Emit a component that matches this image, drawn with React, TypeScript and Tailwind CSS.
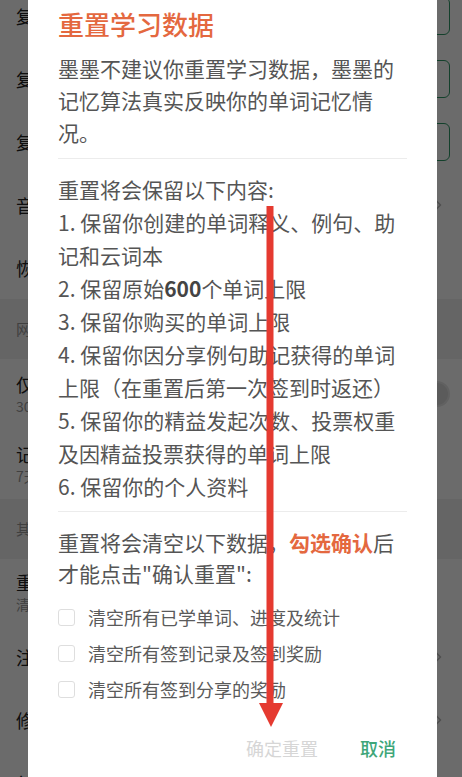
import { ChevronRight } from "lucide-react";

type Row = {
  label: string;
  sub?: string;
  right?: "button" | "chevron" | "switch";
  h: string;
  header?: boolean;
};

const rows: Row[] = [
  { label: "复习提醒", right: "button", h: "h-[63px]" },
  { label: "复习模式", right: "button", h: "h-[63px]" },
  { label: "复习顺序", right: "button", h: "h-[63px]" },
  { label: "音频设置", right: "chevron", h: "h-[63px]" },
  { label: "恢复默认设置", h: "h-[63px]" },
  { label: "网络", h: "h-[60px]", header: true },
  { label: "仅在WiFi下下载", sub: "30MB", right: "switch", h: "h-[70px]" },
  { label: "记忆缓存", sub: "7天", h: "h-[70px]" },
  { label: "其他", h: "h-[60px]", header: true },
  { label: "重置学习数据", sub: "清空学习记录", h: "h-[65px]" },
  { label: "注销账号", right: "chevron", h: "h-[65px]" },
  { label: "修改密码", right: "chevron", h: "h-[62px]" },
  { label: "关于我们", right: "chevron", h: "h-[63px]" },
];

const intro = ["墨墨不建议你重置学习数据，墨墨的", "记忆算法真实反映你的单词记忆情", "况。"];

const clearItems = ["清空所有已学单词、进度及统计", "清空所有签到记录及签到奖励", "清空所有签到分享的奖励"];

function SettingsList() {
  return (
    <div className="-mt-[16px] flex flex-col">
      {rows.map((r) =>
        r.header ? (
          <div key={r.label} className={`${r.h} flex items-center bg-[#f1f1f1] px-4 text-[15px] text-[#999]`}>
            {r.label}
          </div>
        ) : (
          <div key={r.label} className={`${r.h} flex items-center justify-between pl-4 pr-3`}>
            <div className="flex flex-col">
              <span className="text-[18px] leading-6 text-[#222]">{r.label}</span>
              {r.sub && <span className="text-[14px] leading-5 text-[#999]">{r.sub}</span>}
            </div>
            {r.right === "button" && (
              <div className="flex h-[38px] w-[64px] items-center justify-center rounded-[6px] border border-[#2f9a68] text-[15px] text-[#2f9a68]">
                设置
              </div>
            )}
            {r.right === "chevron" && <ChevronRight size={20} className="mr-[2px] text-[#bbb]" />}
            {r.right === "switch" && (
              <div className="flex h-[26px] w-[48px] items-center justify-end rounded-full bg-[#e8e8e8] px-[2px]">
                <div className="h-[22px] w-[22px] rounded-full bg-[#d9d9d9]" />
              </div>
            )}
          </div>
        )
      )}
    </div>
  );
}

function ResetDialog() {
  return (
    <div className="absolute left-[28px] top-[-16px] w-[409px] rounded-[14px] bg-white px-[30px] pt-[23px] pb-[40px]">
      <h1 className="text-[26px] font-medium leading-[34px] text-[#e4683f]">重置学习数据</h1>

      <div className="mt-[11px] text-[21px] leading-[32px] text-[#555]">
        {intro.map((l) => (
          <div key={l} className="whitespace-nowrap">
            {l}
          </div>
        ))}
      </div>

      <div className="mt-[10px] h-px bg-[#ececec]" />

      {/* what is kept after a reset */}
      <div className="mt-[14px] whitespace-nowrap text-[21px] leading-[33px] text-[#555]">
        <div>重置将会保留以下内容:</div>
        <div>1. 保留你创建的单词释义、例句、助</div>
        <div>记和云词本</div>
        <div>
          2. 保留原始<b className="font-bold text-[#444]">600</b>个单词上限
        </div>
        <div>3. 保留你购买的单词上限</div>
        <div>4. 保留你因分享例句助记获得的单词</div>
        <div>上限（在重置后第一次签到时返还）</div>
        <div>5. 保留你的精益发起次数、投票权重</div>
        <div>及因精益投票获得的单词上限</div>
        <div>6. 保留你的个人资料</div>
      </div>

      <div className="mt-[8px] h-px bg-[#ececec]" />

      <div className="mt-[15px] whitespace-nowrap text-[21px] leading-[31px] text-[#555]">
        <div>
          重置将会清空以下数据，<b className="font-bold text-[#e4683f]">勾选确认</b>后
        </div>
        <div>才能点击"确认重置":</div>
      </div>

      <div className="mt-[10px] flex flex-col">
        {clearItems.map((t) => (
          <label key={t} className="flex h-[36px] items-center gap-[13px]">
            <span className="h-[17px] w-[17px] rounded-[3px] border border-[#dedede]" />
            <span className="text-[18px] text-[#5a5a5a]">{t}</span>
          </label>
        ))}
      </div>

      <div className="mt-[22px] flex justify-end gap-[20px]">
        <button type="button" className="h-[38px] px-[11px] text-[18px] text-[#d6d6d6]">
          确定重置
        </button>
        <button type="button" className="h-[38px] px-[11px] text-[18px] font-medium text-[#3ea679]">
          取消
        </button>
      </div>
    </div>
  );
}

export default function App() {
  return (
    <div className="relative h-[777px] w-[462px] overflow-hidden bg-white font-['Noto_Sans_CJK_SC',sans-serif]">
      <SettingsList />
      <div className="absolute inset-0 bg-black/[0.58]" />
      <ResetDialog />
      {/* red annotation arrow drawn over the dialog */}
      <svg className="pointer-events-none absolute left-0 top-0" width="462" height="777" viewBox="0 0 462 777">
        <line x1="270" y1="206" x2="270" y2="708" stroke="#e53a30" strokeWidth="7" />
        <polygon points="259,703 283,703 271,727" fill="#e53a30" />
      </svg>
    </div>
  );
}
